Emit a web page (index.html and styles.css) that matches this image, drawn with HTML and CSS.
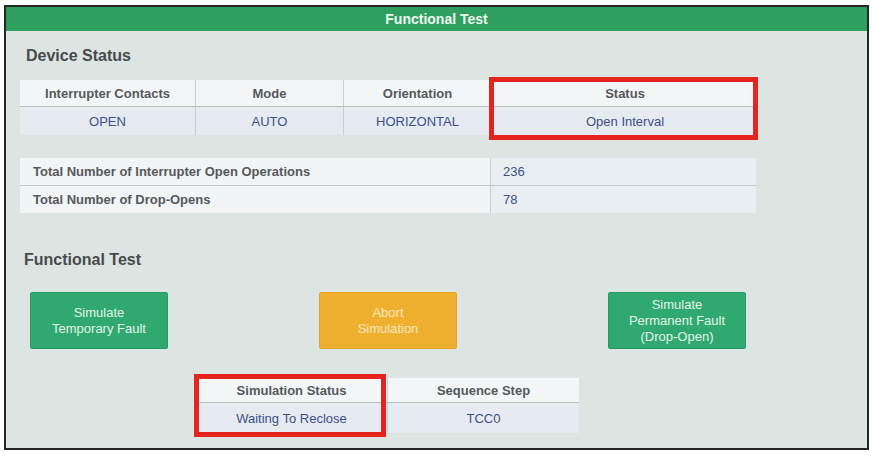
FILE: index.html
```html
<!DOCTYPE html>
<html lang="en">
<head>
    <meta charset="UTF-8">
    <meta name="viewport" content="width=device-width, initial-scale=1.0">
    <title>Functional Test</title>
    <link rel="stylesheet" href="styles.css">
</head>
<body>
    <div class="frame">
        <div class="title">Functional Test</div>
        <div class="panel">
            <h2 class="section">Device Status</h2>

            <div class="tbl-wrap">
                <table class="grid status">
                    <tr class="head">
                        <th class="c1">Interrupter Contacts</th>
                        <th class="c2">Mode</th>
                        <th class="c3">Orientation</th>
                        <th class="c4">Status</th>
                    </tr>
                    <tr class="data">
                        <td>OPEN</td>
                        <td>AUTO</td>
                        <td>HORIZONTAL</td>
                        <td>Open Interval</td>
                    </tr>
                </table>
                <div class="highlight hl-status"></div>
            </div>

            <table class="grid counts">
                <tr>
                    <th class="label">Total Number of Interrupter Open Operations</th>
                    <td class="value">236</td>
                </tr>
                <tr>
                    <th class="label">Total Number of Drop-Opens</th>
                    <td class="value">78</td>
                </tr>
            </table>

            <h2 class="section second">Functional Test</h2>

            <div class="buttons">
                <button class="btn green">Simulate<br>Temporary Fault</button>
                <button class="btn orange">Abort<br>Simulation</button>
                <button class="btn green">Simulate<br>Permanent Fault<br>(Drop-Open)</button>
            </div>

            <div class="tbl-wrap sim-wrap">
                <table class="grid sim">
                    <tr class="head">
                        <th>Simulation Status</th>
                        <th>Sequence Step</th>
                    </tr>
                    <tr class="data">
                        <td>Waiting To Reclose</td>
                        <td>TCC0</td>
                    </tr>
                </table>
                <div class="highlight hl-sim"></div>
            </div>
        </div>
    </div>
</body>
</html>
```

FILE: styles.css
```css
body {
    margin: 0;
    background: #ffffff;
    font-family: 'Liberation Sans', Arial, sans-serif;
}
.frame {
    margin: 5px 0 0 4px;
    width: 861px;
    height: 441px;
    border: 2px solid #262626;
    background: #dce5e2;
    display: flex;
    flex-direction: column;
}
.title {
    height: 24px;
    line-height: 24px;
    background: #2f9f60;
    color: #eef8f0;
    font-size: 14px;
    font-weight: bold;
    text-align: center;
}
.panel {
    padding: 15px 0 0 14px;
}
.section {
    margin: 0;
    padding-left: 6px;
    font-size: 16px;
    line-height: 20px;
    color: #474b4e;
}
.section.second {
    margin-top: 37px;
    padding-left: 4px;
}

/* tables */
.tbl-wrap {
    position: relative;
    width: 735px;
    margin-top: 14px;
}
.grid {
    border-collapse: collapse;
    font-size: 13px;
    table-layout: fixed;
}
.grid th,
.grid td {
    padding: 0;
    text-align: center;
}
.grid th {
    color: #55595c;
    font-weight: bold;
}
.grid td {
    color: #3d4f8a;
}
.head th {
    height: 26px;
    background: #f3f6f6;
    border-left: 1px solid #c9cfcf;
    border-bottom: 1px solid #b9bec2;
}
.data td {
    height: 28px;
    background: #e5ebf1;
    border-left: 1px solid #c9cfcf;
}
.head th:first-child,
.data td:first-child {
    border-left: none;
}
.status {
    width: 735px;
}
.status .c1 { width: 175px; }
.status .c2 { width: 147px; }
.status .c3 { width: 147px; }
.status .c4 { width: 266px; }

.counts {
    width: 735px;
    margin-top: 23px;
}
.counts tr:first-child th,
.counts tr:first-child td {
    border-bottom: 1px solid #c4c9cc;
}
.counts .label {
    width: 457px;
    height: 27px;
    padding-left: 13px;
    text-align: left;
    background: #f2f5f5;
}
.counts .value {
    width: 253px;
    padding-left: 12px;
    text-align: left;
    background: #e8eef2;
    border-left: 1px solid #c9cfcf;
}

/* buttons */
.buttons {
    display: flex;
    gap: 151px;
    margin: 22px 0 0 10px;
}
.btn {
    width: 138px;
    height: 57px;
    border-radius: 2px;
    font-family: 'Liberation Sans', Arial, sans-serif;
    font-size: 13px;
    line-height: 16px;
    padding: 0;
    cursor: pointer;
}
.btn.green {
    background: #2fa96f;
    border: 1px solid #2a9a63;
    color: #e3f4ea;
}
.btn.orange {
    background: #f0b02f;
    border: 1px solid #e3a428;
    color: #fbe8c0;
}

/* simulation */
.sim-wrap {
    width: 382px;
    margin: 29px 0 0 176px;
}
.sim {
    width: 382px;
}
.sim .head th {
    height: 24px;
    width: 191px;
}
.sim .data td {
    height: 30px;
}

/* red highlight boxes */
.highlight {
    position: absolute;
    border: 5px solid #e3241f;
    box-sizing: border-box;
}
.hl-status {
    left: 469px;
    top: -3px;
    width: 269px;
    height: 63px;
}
.hl-sim {
    left: -2px;
    top: -4px;
    width: 192px;
    height: 63px;
}
```
